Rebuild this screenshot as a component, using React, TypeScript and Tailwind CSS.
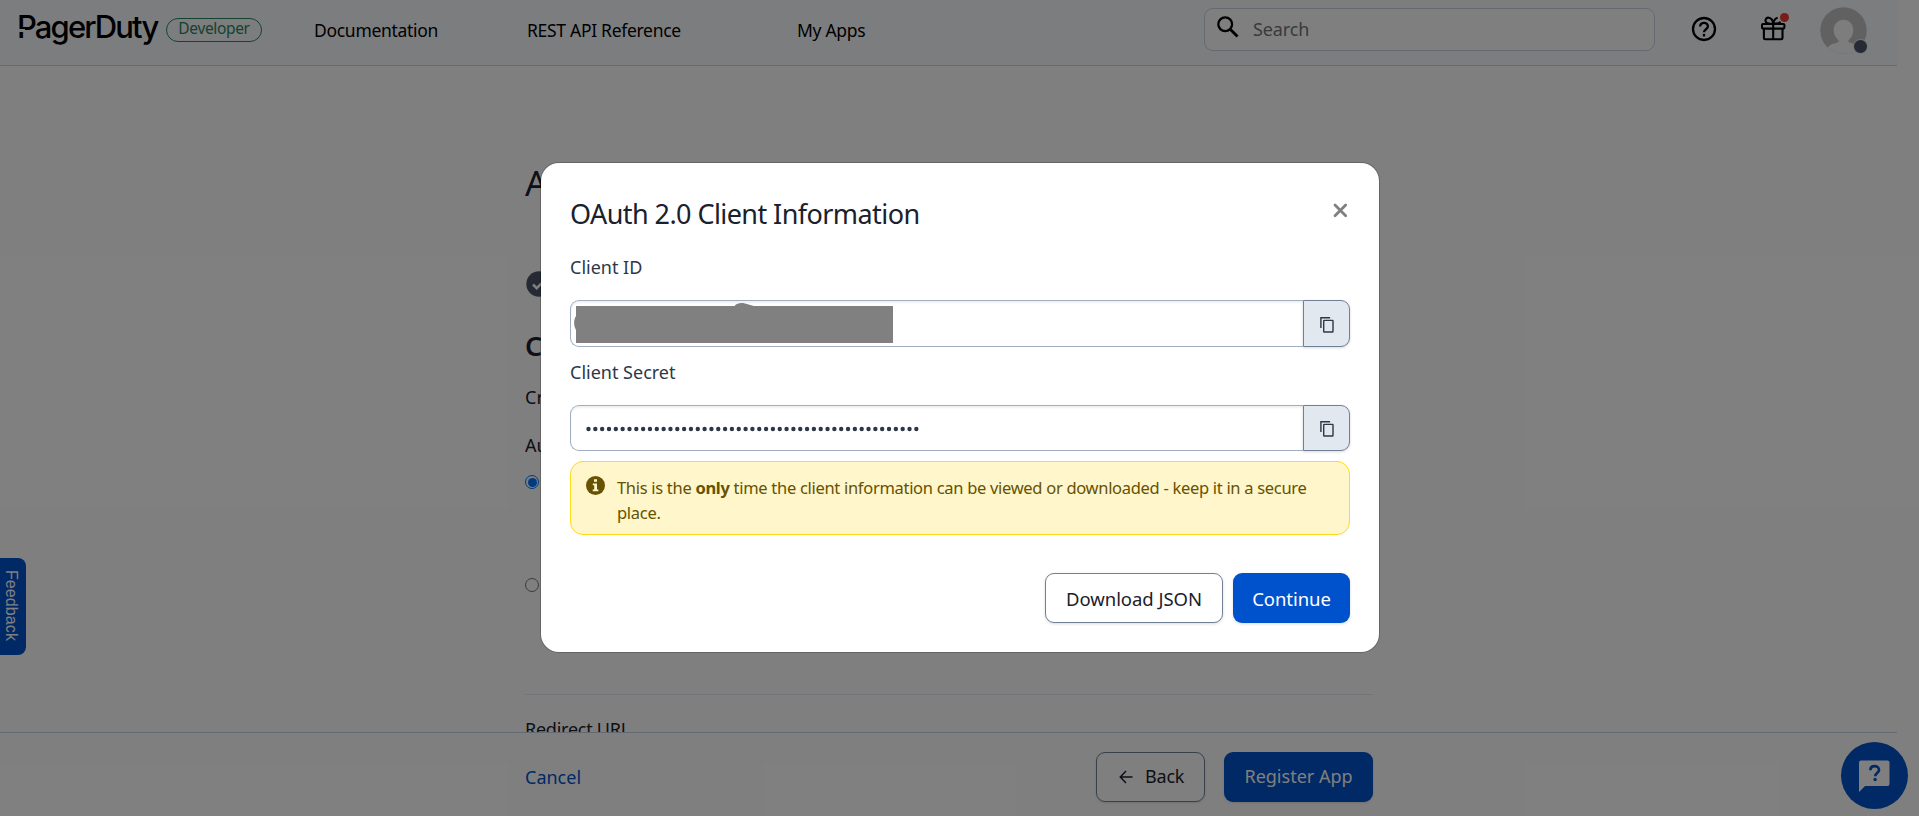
import React from "react";

const navText =
  "font-['Noto_Sans',sans-serif] text-[17.5px] leading-6 tracking-[-0.3px] whitespace-nowrap text-black";

function CopyIcon() {
  return (
    <svg width="16" height="18" viewBox="0 0 16 18" fill="none" stroke="#2f3645" strokeWidth="1.4">
      <path d="M1.9 12V1.8h9.2" />
      <rect x="4.7" y="4.4" width="9.3" height="11.6" rx="0.5" />
    </svg>
  );
}

function HelpIcon() {
  return (
    <svg width="26" height="26" viewBox="0 0 26 26" fill="none" stroke="#000" strokeWidth="2.3">
      <circle cx="13" cy="13" r="11" />
      <path d="M9.1 10.6c0-2.2 1.7-3.8 3.9-3.8s3.9 1.6 3.9 3.7c0 2.6-3.9 2.9-3.9 5.7" />
      <path d="M13 17.9v2.5" />
    </svg>
  );
}

function GiftIcon() {
  return (
    <svg width="28" height="28" viewBox="0 0 28 28" fill="none" stroke="#000" strokeWidth="2.1">
      <rect x="2" y="9" width="22.4" height="4.6" rx="1" />
      <path d="M3.9 13.6v9.5c0 .7.5 1.2 1.2 1.2h16.2c.7 0 1.2-.5 1.2-1.2v-9.5M13.2 9v15" />
      <path d="M13.2 8.500C11.400 9 6.200 8.800 5.600 6.200 5.100 3.800 6.900 2.400 8.900 2.700c2.400.4 4 3.400 4.300 5.800ZM13.200 8.500C13.700 6.100 15.300 3.100 17.700 2.700M13.200 8.500c3 .3 6.500 0 7.200-1.800" />
    </svg>
  );
}

function Avatar() {
  return (
    <div className="relative h-[47px] w-[47px]">
      <svg width="47" height="47" viewBox="0 0 47 47">
        <defs>
          <clipPath id="avatar-clip">
            <circle cx="23.5" cy="23.5" r="23.2" />
          </clipPath>
        </defs>
        <g clipPath="url(#avatar-clip)">
          <rect width="47" height="47" fill="#c2c3c3" />
          <path
            d="M23.5 12.7c-5.7 0-9.8 4.4-9.8 10.4 0 4.4 2 8 5 10.3.2 2-1.500 2.300-4.500 3.100-3.500.9-5.600 2.300-7 5V50h33v-8.500c-1.400-2.700-3.900-4.100-7.400-5-3-.8-4.700-1.100-4.500-3.100 3-2.300 5-5.900 5-10.300 0-6-4.100-10.400-9.800-10.400Z"
            fill="#fbfbfb"
          />
        </g>
      </svg>
      <span className="absolute top-[32px] left-[33px] h-[15px] w-[15px] rounded-full border-[1.5px] border-[#f9fafd] bg-[#4a5568]" />
    </div>
  );
}

function Header() {
  return (
    <header className="mr-[22px] flex h-[66px] shrink-0 items-start border-b border-[#cbd5e0] bg-[#f9fbfe]">
      <div className="relative mt-[7px] ml-[17px] w-[141px] font-['Inter',sans-serif] text-[31px] leading-[40px] font-medium tracking-[-1.88px] whitespace-nowrap text-black">
        PagerDuty
        <span className="absolute top-[22px] left-0 h-[3px] w-[8px] bg-[#f9fbfe]" />
      </div>
      <div className="ml-[8px] mt-[18px] flex h-6 w-24 items-center justify-center rounded-full border border-[#2f855a] pb-[2px] font-['Noto_Sans',sans-serif] text-[15.5px] tracking-[-0.35px] text-[#2f855a]">
        Developer
      </div>
      <nav className="mt-[18px] ml-[52px] flex">
        <a className={navText + " w-[213px]"}>Documentation</a>
        <a className={navText + " w-[270px]"}>REST API Reference</a>
        <a className={navText}>My Apps</a>
      </nav>
      <div className="mt-2 mr-[36px] ml-auto flex h-[43px] w-[451px] items-center rounded-[9px] border border-[#cbd5e0] bg-white">
        <svg className="mb-[5px] ml-[11px]" width="24" height="24" viewBox="0 0 24 24" fill="none" stroke="#000" strokeWidth="2.3">
          <circle cx="9.2" cy="9.2" r="6.9" />
          <path d="M14 14 21.500 21.500" strokeWidth="2.8" />
        </svg>
        <span className="ml-[13px] font-['Noto_Sans',sans-serif] text-[18px] tracking-[-0.1px] text-[#757575]">
          Search
        </span>
      </div>
      <div className="mt-[16px]">
        <HelpIcon />
      </div>
      <div className="relative mt-[15px] ml-[43px]">
        <GiftIcon />
        <span className="absolute -top-[2px] left-[20px] h-[9px] w-[9px] rounded-full bg-[#f03a34]" />
      </div>
      <div className="mt-[7px] mr-[30px] ml-[32px]">
        <Avatar />
      </div>
    </header>
  );
}

function Page() {
  return (
    <div className="flex h-[816px] w-full flex-col overflow-hidden bg-white">
      <Header />
      <main className="ml-[525px] flex h-[666px] w-[848px] flex-col overflow-hidden text-[#1a202c]">
        <h1 className="mt-[93px] shrink-0 text-[35px] leading-[48px]">A</h1>
        <div className="mt-[64px] ml-[1px] shrink-0">
          <svg width="26" height="26" viewBox="0 0 26 26">
            <circle cx="13" cy="13" r="12.7" fill="#4a5568" />
            <path d="m7 13.5 3.7 3.700 7.500-7.500" fill="none" stroke="#fff" strokeWidth="2.5" />
          </svg>
        </div>
        <h2 className="mt-[29px] shrink-0 text-[27px] leading-[40px] font-semibold">C</h2>
        <p className="mt-[19px] shrink-0 text-[18px] leading-6">Cr</p>
        <p className="mt-[24px] shrink-0 text-[18px] leading-6">Au</p>
        <div className="mt-[18px] flex h-[14px] w-[14px] shrink-0 items-center justify-center rounded-full border border-[#0075ff]">
          <span className="h-[9px] w-[9px] rounded-full bg-[#0075ff]" />
        </div>
        <div className="mt-[89px] h-[14px] w-[14px] shrink-0 rounded-full border border-[#767676]" />
        <div className="mt-[102px] shrink-0 border-t border-[#e2e8f0]" />
        <p className="mt-[22px] shrink-0 text-[18px] leading-6 tracking-[-0.25px]">Redirect URL</p>
      </main>
      <footer className="mr-[22px] flex h-[84px] shrink-0 items-center border-t border-[#cbd5e0]">
        <a className="mt-[6px] ml-[525px] text-[18px] text-[#0052cc]">Cancel</a>
        <div className="mt-[5px] ml-auto flex h-[50px] w-[109px] items-center rounded-[9px] border border-[#718096] pb-[1px] pl-[22px] text-[18px] tracking-[-0.2px] text-[#1a202c] shadow-sm">
          <svg className="mr-[12px]" width="14" height="14" viewBox="0 0 14 14" fill="none" stroke="#1a202c" strokeWidth="1.5">
            <path d="M13.5 7H1.5M7 1 1.3 7 7 13" />
          </svg>
          Back
        </div>
        <div className="mt-[5px] mr-[524px] ml-[19px] flex h-[50px] w-[149px] items-center justify-center rounded-[9px] bg-[#0052cc] pb-[1px] text-[18px] text-white shadow-sm">
          Register App
        </div>
      </footer>
    </div>
  );
}

function FeedbackTab() {
  return (
    <div className="absolute top-[558px] left-0 flex h-[97px] w-[26px] items-center justify-center rounded-r-[8px] bg-[#0052cc] pr-[5px] pb-[2px] font-['Liberation_Sans',sans-serif] text-[16px] tracking-[0.1px] text-white [writing-mode:vertical-rl]">
      Feedback
    </div>
  );
}

function ChatButton() {
  return (
    <div className="absolute top-[742px] left-[1841px] flex h-[67px] w-[67px] items-center justify-center rounded-full bg-[#0052cc]">
      <svg width="34" height="34" viewBox="0 0 34 34">
        <path d="M3 1.5h26.5a2 2 0 0 1 2 2v21.500a2 2 0 0 1-2 2H7L1 33V3.500a2 2 0 0 1 2-2Z" fill="#fff" />
        <path
          d="M12.4 11.2c0-2.500 1.800-4 4.300-4s4.300 1.500 4.300 3.700c0 3-3.800 3.200-3.800 6.300"
          fill="none"
          stroke="#0052cc"
          strokeWidth="2.7"
        />
        <circle cx="17.1" cy="20.5" r="1.7" fill="#0052cc" />
      </svg>
    </div>
  );
}

function CopyField({ children, className }: { children: React.ReactNode; className: string }) {
  return (
    <div className={"flex " + className}>
      <div className="flex flex-1 items-center rounded-l-[9px] border border-r-0 border-[#a0aec0] bg-white shadow-[inset_0_2px_2px_rgba(0,0,0,0.06)]">
        {children}
      </div>
      <button className="flex w-[47px] items-center justify-center rounded-r-[9px] border border-[#718096] bg-[#e2e8f0] pt-[2px] shadow-[0_1px_3px_rgba(0,0,0,0.15)]">
        <CopyIcon />
      </button>
    </div>
  );
}

function Modal() {
  return (
    <section className="absolute top-[163px] left-[541px] flex h-[489px] w-[838px] flex-col rounded-[18px] bg-white px-[29px] pt-[31px] text-[#1a202c] shadow-[0_0_0_1px_rgba(0,0,0,0.2)]">
      <div className="flex items-start">
        <h2 className="text-[27px] leading-[40px] tracking-[-0.57px]">OAuth 2.0 Client Information</h2>
        <svg className="mt-[9px] mr-[2px] ml-auto" width="15" height="15" viewBox="0 0 15 15" fill="none" stroke="#808080" strokeWidth="2.8" strokeLinecap="round">
          <path d="m2 2 10.700 10.700M12.700 2 2 12.700" />
        </svg>
      </div>
      <label className="mt-[21px] text-[18px] leading-6 text-[#2d3748]">Client ID</label>
      <CopyField className="mt-[21px] h-[47px]">
        <svg width="325" height="45" viewBox="0 0 325 45">
          <path d="M5 5H163.500C166 2 170 1.500 174 2.500L183 5H322V42H5V29C2.500 24 2.500 19 5 15Z" fill="#808080" />
        </svg>
      </CopyField>
      <label className="mt-[13px] text-[18px] leading-6 text-[#2d3748]">Client Secret</label>
      <CopyField className="mt-[21px] h-[46px]">
        <svg className="mt-[2px] ml-[15px]" width="335" height="8" viewBox="0 0 335 8">
          <path d="M2.500 4H332" stroke="#2d3748" strokeWidth="4.4" strokeLinecap="round" strokeDasharray="0 6.83" />
        </svg>
      </CopyField>
      <div className="mt-[10px] flex h-[74px] rounded-[13px] border border-[#fedb1a] bg-[#fff6cc] pt-[13px] pl-[15px]">
        <svg className="mt-[1px] shrink-0" width="19" height="19" viewBox="0 0 19 19">
          <circle cx="9.5" cy="9.5" r="9.5" fill="#665200" />
          <path d="M8 3.300h3v2.500H8ZM6.800 7.500H11v6h1.400v1.700H6.700v-1.700h1.500V9.200H6.800Z" fill="#fff6cc" />
        </svg>
        <p className="ml-[12px] text-[16.5px] leading-[25px] tracking-[-0.3px] whitespace-nowrap text-[#665200]">
          This is the <b>only</b> time the client information can be viewed or downloaded - keep it in a secure
          <br />
          place.
        </p>
      </div>
      <div className="mt-[38px] flex justify-end gap-[10px] text-[18.5px] tracking-[-0.05px]">
        <button className="flex h-[50px] w-[178px] items-center justify-center rounded-[9px] border border-[#718096] bg-white pt-[2px] shadow-[0_1px_3px_rgba(0,0,0,0.15)]">
          Download JSON
        </button>
        <button className="flex h-[50px] w-[117px] items-center justify-center rounded-[9px] bg-[#0052cc] pt-[2px] text-white shadow-[0_1px_3px_rgba(0,0,0,0.15)]">
          Continue
        </button>
      </div>
    </section>
  );
}

export default function App() {
  return (
    <div className="relative h-[816px] w-[1919px] overflow-hidden font-['Noto_Sans',sans-serif]">
      <Page />
      <FeedbackTab />
      <ChatButton />
      <div className="absolute inset-0 bg-black/50" />
      <Modal />
    </div>
  );
}
